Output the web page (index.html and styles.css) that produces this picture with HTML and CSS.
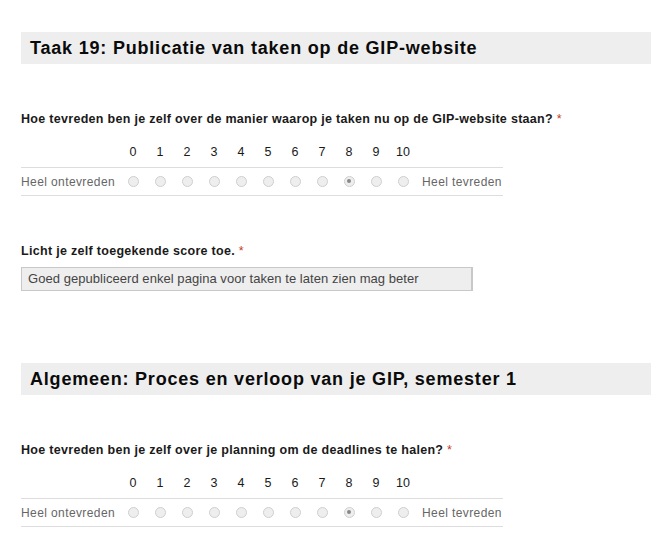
FILE: index.html
```html
<!DOCTYPE html>
<html lang="nl">
<head>
<meta charset="utf-8">
<title>GIP formulier</title>
<link rel="stylesheet" href="styles.css">
</head>
<body>
<div class="form">
  <div class="section">
    <h2 class="section-title">Taak 19: Publicatie van taken op de GIP-website</h2>
    <div class="question q-scale">
      <div class="q-label">Hoe tevreden ben je zelf over de manier waarop je taken nu op de GIP-website staan? <span class="req">*</span></div>
      <div class="scale">
        <div class="nums">
          <span class="edge"></span>
          <span>0</span><span>1</span><span>2</span><span>3</span><span>4</span><span>5</span><span>6</span><span>7</span><span>8</span><span>9</span><span>10</span>
        </div>
        <div class="radios">
          <span class="edge">Heel ontevreden</span>
          <span><i class="radio"></i></span><span><i class="radio"></i></span><span><i class="radio"></i></span><span><i class="radio"></i></span><span><i class="radio"></i></span><span><i class="radio"></i></span><span><i class="radio"></i></span><span><i class="radio"></i></span><span><i class="radio checked"></i></span><span><i class="radio"></i></span><span><i class="radio"></i></span>
          <span class="edge-r">Heel tevreden</span>
        </div>
      </div>
    </div>
    <div class="question q-text">
      <div class="q-label">Licht je zelf toegekende score toe. <span class="req">*</span></div>
      <div class="textbox">Goed gepubliceerd enkel pagina voor taken te laten zien mag beter</div>
    </div>
  </div>
  <div class="section second">
    <h2 class="section-title">Algemeen: Proces en verloop van je GIP, semester 1</h2>
    <div class="question q-scale">
      <div class="q-label">Hoe tevreden ben je zelf over je planning om de deadlines te halen? <span class="req">*</span></div>
      <div class="scale">
        <div class="nums">
          <span class="edge"></span>
          <span>0</span><span>1</span><span>2</span><span>3</span><span>4</span><span>5</span><span>6</span><span>7</span><span>8</span><span>9</span><span>10</span>
        </div>
        <div class="radios">
          <span class="edge">Heel ontevreden</span>
          <span><i class="radio"></i></span><span><i class="radio"></i></span><span><i class="radio"></i></span><span><i class="radio"></i></span><span><i class="radio"></i></span><span><i class="radio"></i></span><span><i class="radio"></i></span><span><i class="radio"></i></span><span><i class="radio checked"></i></span><span><i class="radio"></i></span><span><i class="radio"></i></span>
          <span class="edge-r">Heel tevreden</span>
        </div>
      </div>
    </div>
  </div>
</div>
</body>
</html>
```

FILE: styles.css
```css
html, body {
  margin: 0;
  padding: 0;
  background: #ffffff;
}
body {
  font-family: "Liberation Sans", Arial, sans-serif;
  color: #222;
}
.form {
  padding: 32px 19px 0 21px;
  width: 630px;
}
.section-title {
  margin: 0;
  height: 32px;
  line-height: 32px;
  padding-left: 9px;
  background: #eeeeee;
  font-size: 18px;
  letter-spacing: 0.8px;
  font-weight: bold;
  color: #0a0a0a;
  white-space: nowrap;
}
.section.second {
  margin-top: 72px;
}
.question {
  margin-top: 48px;
}
.q-label {
  font-size: 12.5px;
  letter-spacing: 0.3px;
  line-height: 14px;
  font-weight: bold;
  color: #1a1a1a;
  white-space: nowrap;
}
.req {
  color: #c43b1d;
  font-weight: normal;
}
.scale {
  width: 482px;
  margin-top: 19px;
}
.nums, .radios {
  display: grid;
  grid-template-columns: 98.5px repeat(11, 27px) 1fr;
  align-items: center;
}
.nums {
  height: 14px;
  font-size: 12.5px;
  line-height: 14px;
  color: #1a1a1a;
  border-bottom: 1px solid #dddddd;
  padding-bottom: 8px;
}
.nums span, .radios span {
  text-align: center;
}
.radios {
  height: 27px;
  border-bottom: 1px solid #dddddd;
  font-size: 12px;
  letter-spacing: 0.4px;
  color: #666;
  white-space: nowrap;
}
.radios .edge {
  text-align: left;
}
.radios .edge-r {
  text-align: left;
  padding-left: 5.5px;
}
.radio {
  display: inline-block;
  width: 9px;
  height: 9px;
  border: 1px solid #cfcfcf;
  border-radius: 50%;
  background: #eeeeee;
  vertical-align: middle;
  position: relative;
  top: -1px;
}
.radio.checked::after {
  content: "";
  position: absolute;
  left: 2.5px;
  top: 2.5px;
  width: 4px;
  height: 4px;
  border-radius: 50%;
  background: #888;
}
.q-text {
  margin-top: 48px;
}
.textbox {
  margin-top: 9px;
  width: 443px;
  height: 22px;
  line-height: 22px;
  padding: 0 0 0 6px;
  background: #eeeeee;
  border: 1px solid #c8c8c8;
  border-right: 2px solid #c8c8c8;
  font-size: 13px;
  letter-spacing: 0.05px;
  color: #444;
  white-space: nowrap;
}
```
